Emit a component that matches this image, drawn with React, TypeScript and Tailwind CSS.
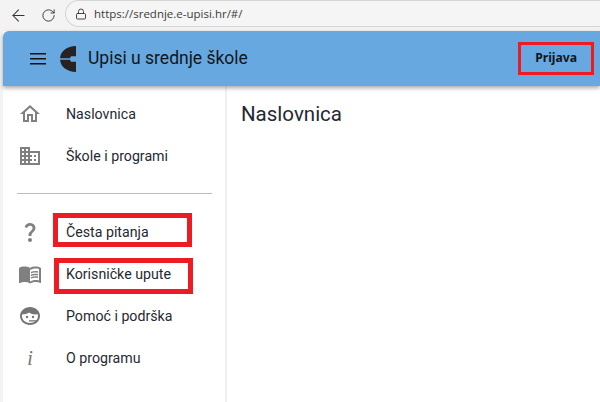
import type { ReactNode } from "react";
import { ArrowLeft, Lock, RotateCw } from "lucide-react";

const HomeIcon = () => (
  <svg viewBox="0 0 24 24" className="w-6 h-6 fill-[#808080]">
    <path d="M12 5.69l5 4.5V18h-2v-6H9v6H7v-7.81l5-4.5M12 3L2 12h3v8h6v-6h2v6h6v-8h3L12 3z" />
  </svg>
);

const DomainIcon = () => (
  <svg viewBox="0 0 24 24" className="w-6 h-6 fill-[#808080]">
    <path d="M12 7V3H2v18h20V7H12zM6 19H4v-2h2v2zm0-4H4v-2h2v2zm0-4H4V9h2v2zm0-4H4V5h2v2zm4 12H8v-2h2v2zm0-4H8v-2h2v2zm0-4H8V9h2v2zm0-4H8V5h2v2zm10 12h-8v-2h2v-2h-2v-2h2v-2h-2V9h8v10zm-2-8h-2v2h2v-2zm0 4h-2v2h2v-2z" />
  </svg>
);

const QuestionIcon = () => (
  <svg viewBox="0 0 24 24" className="w-6 h-6 fill-[#808080]">
    <path d="M11.07 12.85c.77-1.39 2.25-2.21 3.11-3.44.91-1.29.4-3.7-2.18-3.7-1.69 0-2.52 1.28-2.87 2.34L6.54 6.96C7.25 4.83 9.18 3 11.99 3c2.35 0 3.96 1.07 4.78 2.41.7 1.15 1.11 3.3.03 4.9-1.2 1.77-2.35 2.31-2.97 3.45-.25.46-.35.76-.35 2.24h-2.89c-.01-.78-.13-2.05.48-3.15zM14 20c0 1.1-.9 2-2 2s-2-.9-2-2 .9-2 2-2 2 .9 2 2z" />
  </svg>
);

const BookIcon = () => (
  <svg viewBox="0 0 24 24" className="w-6 h-6 fill-[#808080]">
    <path d="M21 5c-1.11-.35-2.33-.5-3.5-.5-1.95 0-4.05.4-5.5 1.5-1.45-1.1-3.55-1.5-5.5-1.5S2.45 4.9 1 6v14.65c0 .25.25.5.5.5.1 0 .15-.05.25-.05C3.1 20.45 5.05 20 6.5 20c1.95 0 4.05.4 5.5 1.5 1.35-.85 3.8-1.5 5.5-1.5 1.65 0 3.35.3 4.75 1.05.1.05.15.05.25.05.25 0 .5-.25.5-.5V6c-.6-.45-1.25-.75-2-1zm0 13.5c-1.1-.35-2.3-.5-3.5-.5-1.7 0-4.15.65-5.5 1.5V8c1.35-.85 3.8-1.5 5.5-1.5 1.2 0 2.4.15 3.5.5v11.5z" />
    <path d="M17.5 10.5c.88 0 1.73.09 2.5.26V9.24c-.79-.15-1.64-.24-2.5-.24-1.7 0-3.24.29-4.5.83v1.66c1.13-.64 2.7-.99 4.5-.99zM13 12.49v1.66c1.13-.64 2.7-.99 4.5-.99.88 0 1.73.09 2.5.26V11.9c-.79-.15-1.64-.24-2.5-.24-1.7 0-3.24.3-4.5.83zM17.5 14.33c-1.7 0-3.24.29-4.5.83v1.66c1.13-.64 2.7-.99 4.5-.99.88 0 1.73.09 2.5.26v-1.52c-.79-.16-1.64-.24-2.500-.24z" />
  </svg>
);

// face with hair and a headset mic, as in the support link
const FaceIcon = () => (
  <svg viewBox="0 0 24 24" className="w-6 h-6">
    <path className="fill-[#757575]" d="M12 3C6.500 3 2 7 2 12s4.500 9 10 9 10-4 10-9-4.500-9-10-9z" />
    <path className="fill-white" d="M11 8.500c2 1.500 5 2.200 8.600 1.800.3.600.4 1.100.4 1.700 0 3.900-3.600 7-8 7s-8-3.100-8-7c0-.6.100-1.100.4-1.700 3.100-.1 5.600-.5 6.600-1.800z" />
    <circle className="fill-[#757575]" cx="9" cy="13" r="1.200" />
    <circle className="fill-[#757575]" cx="15" cy="13" r="1.200" />
    <path className="fill-[#757575]" d="M11 16.200h8v1.300h-8z" />
  </svg>
);

const LogoIcon = () => (
  <svg viewBox="0 0 16 26" className="w-4 h-[26px]">
    <path className="fill-[#262322]" d="M16 0v10.200h-5l-1 2H.1C.6 5 7 .3 16 0zM16 15.800V26C7 25.700.6 21 .1 13.800H10l1 2h5z" />
  </svg>
);

const items = [
  { label: "Naslovnica", icon: <HomeIcon /> },
  { label: "Škole i programi", icon: <DomainIcon /> },
];

const items2 = [
  { label: "Česta pitanja", icon: <QuestionIcon /> },
  { label: "Korisničke upute", icon: <BookIcon /> },
  { label: "Pomoć i podrška", icon: <FaceIcon /> },
  {
    label: "O programu",
    icon: <span className="w-6 text-center text-[20px] italic text-[#757575] font-['Liberation_Serif',serif]">i</span>,
  },
];

const NavRow = ({ label, icon }: { label: string; icon: ReactNode }) => (
  <div className="h-[42px] flex items-center pl-[15px]">
    <div className="w-12 flex">{icon}</div>
    <span className="pt-px text-[14.2px] text-[#1f2933]">{label}</span>
  </div>
);

const App = () => {
  return (
    <div className="relative w-[600px] h-[402px] overflow-hidden bg-[#f3f3f3] font-['Roboto',sans-serif]">
      {/* Browser bar */}
      <div className="h-[31px] flex items-start">
        <div className="flex items-center gap-[13px] pl-[9px] pt-[6px]">
          <ArrowLeft size={19} strokeWidth={1.3} className="text-[#333]" />
          <RotateCw size={15} strokeWidth={1.5} className="text-[#333]" />
        </div>
        <div className="ml-[9px] flex-1 h-[27px] flex items-center pl-[9px] gap-[7px] border border-r-0 border-[#d4d4d4] rounded-l-full bg-[#f5f5f5]">
          <Lock size={12} strokeWidth={1.8} className="text-[#333]" />
          <span className="text-[11.500px] text-[#3c3c3c] font-['Open_Sans',sans-serif]">https://srednje.e-upisi.hr/#/</span>
        </div>
      </div>

      {/* App */}
      <div className="ml-[3px] h-[371px] flex flex-col bg-white">
        <header className="relative z-10 h-[55px] flex items-center bg-[#66a8df] rounded-tl-md shadow-[0_2px_4px_rgba(0,0,0,0.35)] pl-[27px] pr-[23px]">
          <svg viewBox="0 0 16 12" className="w-4 h-3 fill-[#111]">
            <rect y="0" width="16" height="1.500" />
            <rect y="5" width="16" height="1.500" />
            <rect y="10" width="16" height="1.500" />
          </svg>
          <div className="ml-[14px]">
            <LogoIcon />
          </div>
          <span className="ml-3 text-[17.500px] text-[#10161c]">Upisi u srednje škole</span>
          <span className="ml-auto text-[12.200px] font-bold text-[#10161c] font-['Noto_Sans',sans-serif]">Prijava</span>
        </header>

        <div className="flex-1 flex">
          <aside className="w-[224px] border-r-2 border-[#f0f0f0] pt-[7px]">
            {items.map((it) => (
              <NavRow key={it.label} {...it} />
            ))}
            <div className="mt-[16px] mb-[17px] ml-[14px] mr-[13px] h-px bg-[#bdbdbd]" />
            {items2.map((it) => (
              <NavRow key={it.label} {...it} />
            ))}
          </aside>
          <main className="flex-1 pl-[14px] pt-[13px]">
            <h1 className="text-[20.500px] text-[#1f2933]">Naslovnica</h1>
          </main>
        </div>
      </div>

      {/* Red annotation boxes drawn over the screenshot */}
      <div className="absolute z-20 left-[518px] top-[42px] w-[76px] h-[33px] border-[3px] border-[#ed1c24]" />
      <div className="absolute z-20 left-[53px] top-[213px] w-[139px] h-[34px] border-[5px] border-[#ed1c24]" />
      <div className="absolute z-20 left-[54px] top-[258px] w-[139px] h-[36px] border-[5px] border-[#ed1c24]" />
    </div>
  );
};

export default App;
